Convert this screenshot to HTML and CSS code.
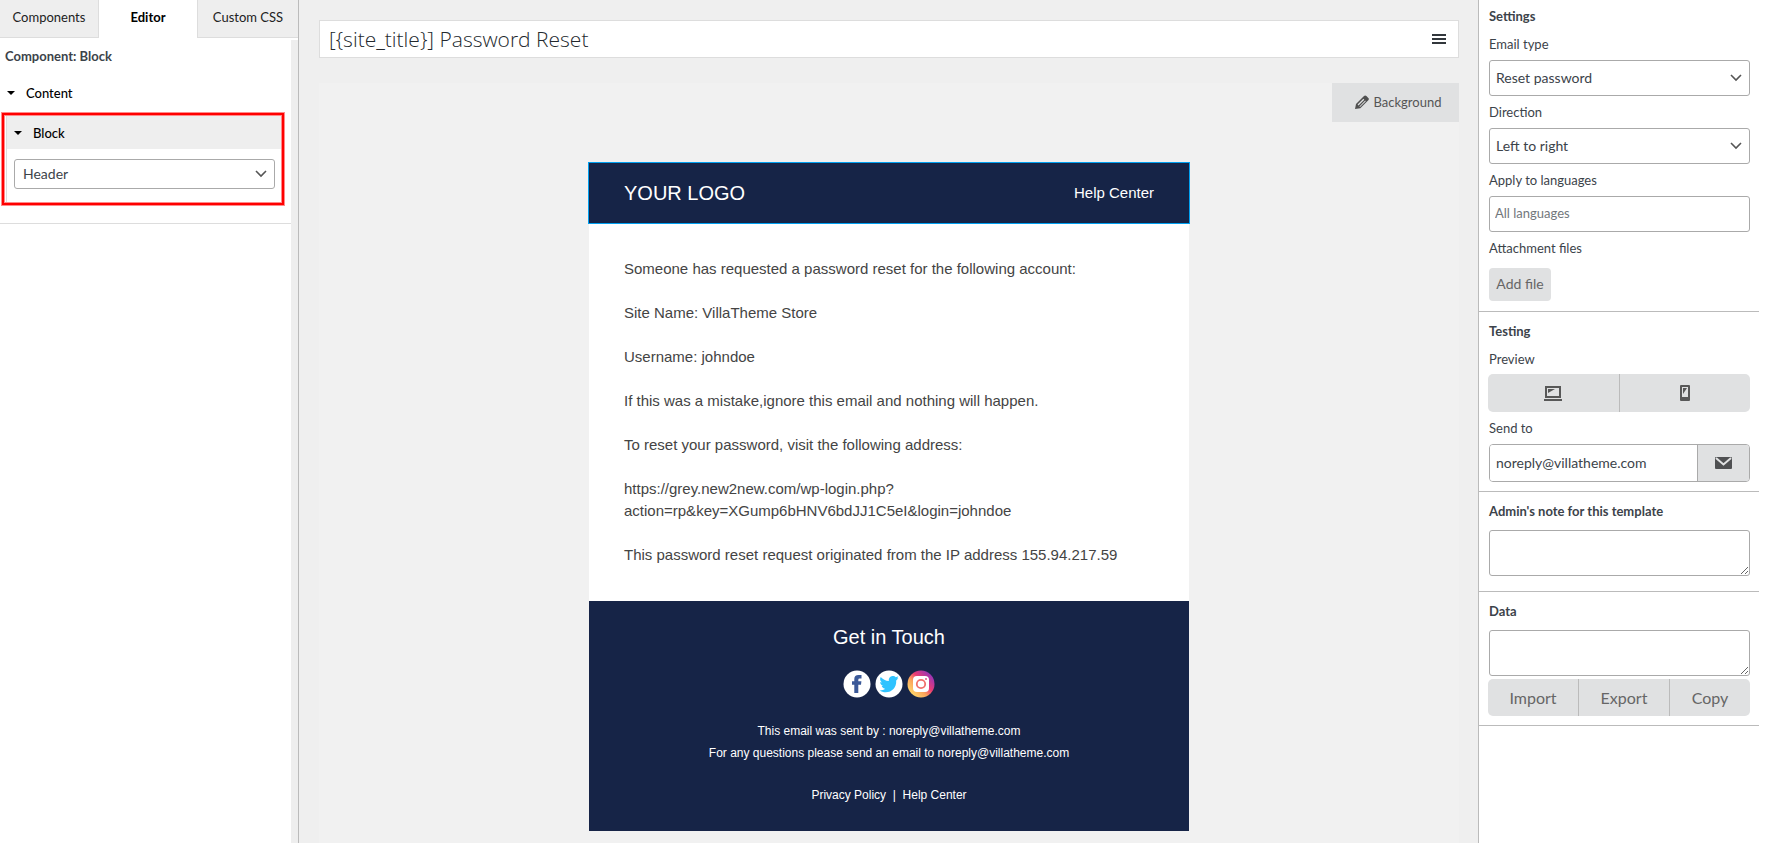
FILE: index.html
```html
<!DOCTYPE html>
<html lang="en">
<head>
<meta charset="utf-8">
<title>Email template editor</title>
<link rel="stylesheet" href="styles.css">
</head>
<body>
<div class="app">
  <aside class="sidebar">
    <nav class="tabs">
      <button class="tab" type="button">Components</button>
      <button class="tab tab-active" type="button">Editor</button>
      <button class="tab" type="button">Custom CSS</button>
    </nav>
    <div class="sidebar-body">
      <h2 class="component-name">Component: Block</h2>
      <button class="group-title" type="button"><span class="caret"></span>Content</button>
      <div class="highlight">
        <div class="block-box">
          <button class="block-title" type="button"><span class="caret"></span>Block</button>
          <div class="block-body">
            <select class="select select-small" aria-label="Block"><option>Header</option></select>
          </div>
        </div>
      </div>
    </div>
  </aside>

  <main class="workspace">
    <div class="subject">
      <input class="subject-input" type="text" aria-label="Email subject" value="[{site_title}] Password Reset">
      <button class="menu-button" type="button" aria-label="Shortcodes">
        <svg width="14" height="10" viewBox="0 0 14 10"><path d="M0 0h14v2H0zM0 4h14v2H0zM0 8h14v2H0z" fill="#32373c"/></svg>
      </button>
    </div>
    <div class="canvas">
      <button class="background-button" type="button">
        <svg width="14" height="14" viewBox="0 0 14 14"><path d="M0 14l1-5 8-8q1.200-1.200 2.400 0l1.900 1.900q1.200 1.200 0 2.400l-8 8z" fill="#505050"/><path d="M2.600 9.600l5.800-5.800.9.900-5.800 5.800zM4.400 11.400l5.800-5.800.6.600L5 12z" fill="#e0e1e2"/></svg>
        Background
      </button>
      <article class="email">
        <header class="email-header">
          <span class="logo">YOUR LOGO</span>
          <a class="email-link help" href="#">Help Center</a>
        </header>
        <div class="email-body">
          <p>Someone has requested a password reset for the following account:</p>
          <p>Site Name: VillaTheme Store</p>
          <p>Username: johndoe</p>
          <p>If this was a mistake,ignore this email and nothing will happen.</p>
          <p>To reset your password, visit the following address:</p>
          <p>https://grey.new2new.com/wp-login.php?<br>action=rp&amp;key=XGump6bHNV6bdJJ1C5eI&amp;login=johndoe</p>
          <p>This password reset request originated from the IP address 155.94.217.59</p>
        </div>
        <footer class="email-footer">
          <h3 class="touch">Get in Touch</h3>
          <div class="social">
            <a href="#" aria-label="Facebook"><svg width="28" height="28" viewBox="0 0 28 28"><circle cx="14" cy="14" r="13.500" fill="#fff"/><path d="M11.300 23v-8.300H9v-3.500h2.300V9q0-4 4.200-4h3v3.400h-1.800q-1.400 0-1.400 1.300v1.500h3.100l-.4 3.500h-2.700V23z" fill="#3b5998"/></svg></a>
            <a href="#" aria-label="Twitter"><svg width="28" height="28" viewBox="0 0 28 28"><circle cx="14" cy="14" r="13.500" fill="#fff"/><path d="M23.400 8.300l-2.200 2.100C21.700 17 17 22.200 10.800 22.200c-2.400 0-4.500-.7-6.200-1.800 2.100.1 4.100-.4 5.600-1.700-1.700-.1-3-1.200-3.500-2.700.6.100 1.100.1 1.700 0-1.900-.5-3.200-2-3.200-4 .6.300 1.200.5 1.800.5C5 11.100 4.600 8.900 5.700 7c2 2.400 4.900 3.900 8.200 4.100C13.300 8.300 15.300 6 17.900 6c1.200 0 2.200.5 2.900 1.200.9-.2 1.800-.5 2.600-1-.3.900-.9 1.700-1.700 2.200.8-.1 1-.1 1.700-.1z" fill="#2fc3ff"/></svg></a>
            <a href="#" aria-label="Instagram"><svg width="28" height="28" viewBox="0 0 28 28"><defs><linearGradient id="ig" x1=".15" y1=".85" x2=".85" y2=".15"><stop offset="0" stop-color="#ffd56b"/><stop offset=".35" stop-color="#fba35a"/><stop offset=".6" stop-color="#ea3c72"/><stop offset="1" stop-color="#9b34b5"/></linearGradient></defs><circle cx="14" cy="14" r="13.500" fill="url(#ig)"/><rect x="6" y="6" width="16" height="16" rx="4" fill="#fff"/><circle cx="14" cy="14" r="4.200" fill="none" stroke="#f0706a" stroke-width="1.800"/><circle cx="19" cy="9" r="1" fill="#e0508a"/></svg></a>
          </div>
          <p class="sent">This email was sent by : <a class="email-link" href="#">noreply@villatheme.com</a><br>For any questions please send an email to <a class="email-link" href="#">noreply@villatheme.com</a></p>
          <p class="policy"><a class="email-link" href="#">Privacy Policy</a>&nbsp; | &nbsp;<a class="email-link" href="#">Help Center</a></p>
        </footer>
      </article>
    </div>
  </main>

  <aside class="settings">
    <section class="section section-first">
      <h2 class="section-title">Settings</h2>
      <label class="label" for="type">Email type</label>
      <select class="select" id="type"><option>Reset password</option></select>
      <label class="label" for="direction">Direction</label>
      <select class="select" id="direction"><option>Left to right</option></select>
      <label class="label" for="languages">Apply to languages</label>
      <input class="field" id="languages" type="text" placeholder="All languages">
      <label class="label" for="attach">Attachment files</label>
      <button class="add-file" id="attach" type="button">Add file</button>
    </section>
    <section class="section">
      <h2 class="section-title">Testing</h2>
      <span class="label">Preview</span>
      <div class="button-group preview">
        <button class="group-button" type="button" aria-label="Desktop preview">
          <svg width="18" height="15" viewBox="0 0 18 15"><path d="M1 0h16v12H1zM3 2v8h12V2z" fill="#585858" fill-rule="evenodd"/><path d="M4 3h7L4 7zM0 13h18v2H0z" fill="#585858"/></svg>
        </button>
        <button class="group-button" type="button" aria-label="Mobile preview">
          <svg width="10" height="16" viewBox="0 0 10 16"><path d="M1 0h8q1 0 1 1v14q0 1-1 1H1q-1 0-1-1V1q0-1 1-1zM2 2v10h6V2z" fill="#585858" fill-rule="evenodd"/><path d="M3 3h4L3 9z" fill="#585858"/></svg>
        </button>
      </div>
      <label class="label" for="send">Send to</label>
      <div class="send-row">
        <input class="send-input" id="send" type="email" value="noreply@villatheme.com">
        <button class="send-button" type="button" aria-label="Send test email">
          <svg width="17" height="12" viewBox="0 0 17 12"><rect width="17" height="12" rx="1" fill="#4f5052"/><path d="M1 1l7.500 6.500L16 1" fill="none" stroke="#e0e1e2" stroke-width="2"/></svg>
        </button>
      </div>
    </section>
    <section class="section section-note">
      <h2 class="section-title"><label for="note">Admin's note for this template</label></h2>
      <textarea class="area" id="note"></textarea>
    </section>
    <section class="section">
      <h2 class="section-title"><label for="data">Data</label></h2>
      <textarea class="area" id="data"></textarea>
      <div class="button-group data-actions">
        <button class="group-button" type="button">Import</button>
        <button class="group-button" type="button">Export</button>
        <button class="group-button" type="button">Copy</button>
      </div>
    </section>
  </aside>
</div>
</body>
</html>
```
FILE: styles.css
```css
* { box-sizing: border-box; }
body { margin: 0; background: #efefef; color: #3c434a; font-family: Lato, sans-serif; font-size: 13px; }
h2, h3, p { margin: 0; }
button, input, select, textarea { font: inherit; color: inherit; margin: 0; }
button { border: 0; padding: 0; background: none; cursor: pointer; }
svg { display: block; flex: none; }

.app { display: grid; grid-template-columns: 299px minmax(0, 1fr) 298px; height: 100vh; overflow: hidden; }

.sidebar { display: flex; flex-direction: column; background: #fff; border-right: 1px solid #bbb; }
.tabs { display: grid; grid-template-columns: 99px 1fr 101px; height: 38px; margin-bottom: 2px; }
.tab { background: #eee; border: 0 solid #ddd; border-bottom-width: 1px; color: #222; padding-bottom: 4px; }
.tab:first-child { border-right-width: 1px; }
.tab:last-child { border-left-width: 1px; }
.tab-active { background: #fff; border-bottom-width: 0; padding-bottom: 5px; color: #000; font-weight: 700; }
.sidebar-body { flex: 1; border-right: 7px solid #eee; }
.component-name { padding: 0 5px; font-size: 13px; line-height: 32px; }
.group-title { display: flex; align-items: center; width: 100%; height: 40px; padding: 1px 0 0 7px; color: #000; font-weight: 500; }
.caret { border: 4px solid transparent; border-top-color: #000; border-bottom: 0; margin-right: 11px; }
.highlight { margin: 1px 7px 0 2px; border: 2px solid #f00; box-shadow: 0 0 0 1px #ff8a8a, inset 0 0 0 1px #ff8a8a; padding: 1px 1px 1px 2px; }
.block-box { border-left: 1px solid #ddd; }
.block-title { display: flex; align-items: center; width: 100%; height: 33px; padding-left: 7px; background: #eee; color: #000; font-weight: 500; }
.block-body { padding: 10px 6px 13px 7px; }
.sidebar-body::after { content: ""; display: block; margin-top: 18px; border-bottom: 1px solid #ddd; }

.select { appearance: none; display: block; width: 100%; height: 36px; padding: 0 24px 2px 6px; border: 1px solid #aaa; border-radius: 3px; font-size: 14px; color: #3c434a;
  background: #fff url("data:image/svg+xml,%3Csvg xmlns='http://www.w3.org/2000/svg' width='12' height='8'%3E%3Cpath d='M1 1l5 5 5-5' fill='none' stroke='%23555' stroke-width='1.600'/%3E%3C/svg%3E") no-repeat right 7px center; }
.select-small { height: 30px; padding-left: 8px; }

.workspace { display: flex; flex-direction: column; gap: 25px; padding: 20px 19px 0 20px; min-width: 0; }
.subject { display: flex; align-items: center; height: 38px; flex: none; padding: 0 12px 0 9px; background: #fff; border: 1px solid #ddd; }
.subject-input { flex: 1; border: 0; padding: 0; background: none; font-family: "Open Sans", sans-serif; font-weight: 300; font-size: 21px; color: #23282d; }
.canvas { flex: 1; display: flex; flex-direction: column; align-items: center; background: #f1f1f1; }
.background-button { display: flex; align-items: center; justify-content: center; gap: 5px; align-self: flex-end; width: 127px; height: 39px; flex: none; background: #e0e1e2; color: #555; padding: 0 0 2px 5px; }

.email { width: 600px; margin-top: 41px; font-family: "Liberation Sans", Arial, sans-serif; font-size: 15px; line-height: 22px; color: #444; background: #fff; }
.email-header, .email-footer { background: #162447; color: #fff; }
.email-header { display: flex; align-items: center; justify-content: space-between; height: 60px; padding: 0 35px; outline: 1px solid #00a0f0; }
.email-link { color: inherit; text-decoration: none; }
.logo { font-size: 20px; }
.email-body { display: grid; gap: 22px; padding: 35px; }
.email-footer { display: flex; flex-direction: column; align-items: center; padding: 21px 35px 25px; font-size: 12px; text-align: center; }
.touch { font-size: 20px; font-weight: 400; line-height: 30px; }
.social { display: flex; gap: 4px; margin: 18px 0 22px; }
.policy { margin-top: 20px; }

.settings { background: #fff; border-left: 1px solid #bbb; padding-right: 17px; }
.section { padding: 5px 9px 9px 10px; border-bottom: 1px solid #bbb; }
.section-first { padding-top: 2px; }
.section-note { padding-bottom: 15px; }
.section-title { font-size: 13px; line-height: 28px; }
.label { display: block; line-height: 32px; }
.section-title + .label { line-height: 28px; margin-bottom: 1px; }
.section-first .section-title + .label { margin-bottom: 2px; }
.field { display: block; width: 100%; height: 36px; border: 1px solid #aaa; border-radius: 3px; padding: 0 5px 3px; }
.field::placeholder { color: #72777c; opacity: 1; }
.add-file { display: block; width: 62px; height: 33px; margin: 4px 0 1px; border-radius: 4px; background: #e0e1e2; color: #666; font-size: 14px; padding-bottom: 2px; }
.button-group { display: flex; border-radius: 5px; background: #e0e1e2; overflow: hidden; margin-left: -1px; }
.group-button { display: flex; align-items: center; justify-content: center; flex: 1; color: #666; font-size: 16px; }
.group-button + .group-button { border-left: 1px solid #bbb; }
.preview { height: 38px; }
.data-actions { height: 37px; margin-top: 3px; }
.data-actions .group-button:last-child { flex: 0 1 81px; }
.send-row { display: flex; height: 38px; border: 1px solid #aaa; border-radius: 4px; overflow: hidden; }
.send-input { flex: 1; min-width: 0; border: 0; padding: 0 6px 2px; font-size: 14px; color: #3c434a; }
.send-button { display: flex; align-items: center; justify-content: center; width: 52px; border-left: 1px solid #aaa; background: #e0e1e2; }
.area { display: block; width: 100%; height: 46px; margin-top: 5px; border: 1px solid #aaa; border-radius: 3px; resize: vertical; }
```
